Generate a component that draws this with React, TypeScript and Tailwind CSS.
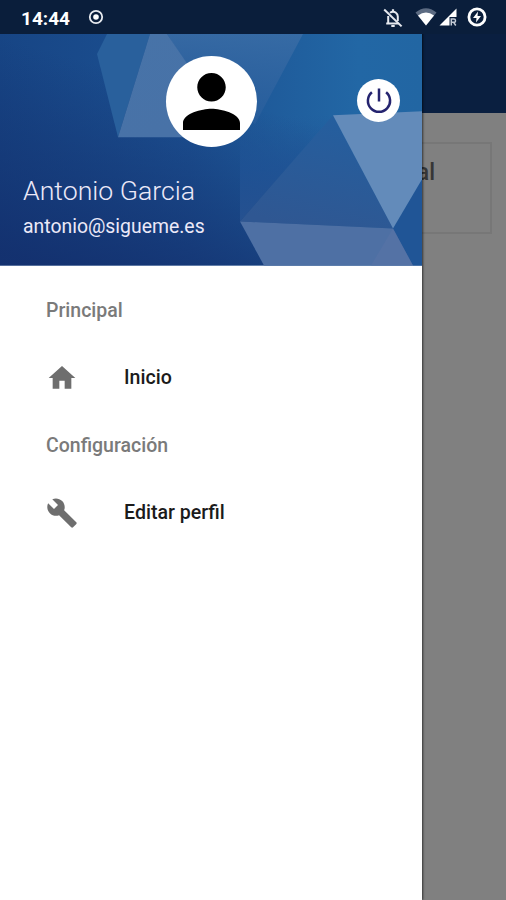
import type { ReactNode } from "react"

type MenuItem = {
  label: string
  icon: ReactNode
}

type MenuSection = {
  title: string
  items: MenuItem[]
}

const HomeIcon = () => (
  <svg viewBox="0 0 24 24" className="size-8 fill-[#6e6e6e]">
    <path d="M10 20v-6h4v6h5v-8h3L12 3 2 12h3v8z" />
  </svg>
)

const WrenchIcon = () => (
  <svg viewBox="0 0 24 24" className="size-8 fill-[#6e6e6e]">
    <path d="M22.7 19l-9.1-9.1c.9-2.3.4-5-1.5-6.9-2-2-5-2.4-7.4-1.3L9 6 6 9 1.6 4.7C.4 7.1.9 10.1 2.9 12.1c1.9 1.9 4.6 2.4 6.9 1.5l9.1 9.1c.4.4 1 .4 1.4 0l2.3-2.3c.5-.4.5-1.1.1-1.4z" />
  </svg>
)

const sections: MenuSection[] = [
  {
    title: "Principal",
    items: [{ label: "Inicio", icon: <HomeIcon /> }],
  },
  {
    title: "Configuración",
    items: [{ label: "Editar perfil", icon: <WrenchIcon /> }],
  },
]

function StatusBar() {
  return (
    <div className="relative z-20 flex h-[34px] shrink-0 items-center bg-[#0a1e3b] pl-[21px] pr-[19px] text-white">
      <span className="mt-0.5 w-[50px] whitespace-nowrap text-[19px] font-bold leading-none">14:44</span>
      <svg viewBox="0 0 16 16" className="ml-[17px] size-4">
        <circle cx="8" cy="8" r="6.2" fill="none" stroke="#e8ebf0" strokeWidth="1.8" />
        <circle cx="8" cy="8" r="2.8" fill="#fff" />
      </svg>

      <div className="ml-auto flex items-center">
        <svg viewBox="0 0 20 20" className="mt-px size-5" fill="none" stroke="#e6e9ef">
          <path d="M7 4.8Q10 2.6 13 4.8Q14.8 6 14.8 8.5V13M5.2 8V15M3.2 15.6H15.5" strokeWidth="2" />
          <path d="M10 1.2V4M8.3 18H11.7" strokeWidth="2.2" />
          <path d="M1.2 1.5L18.6 18.4" strokeWidth="2" />
        </svg>
        <svg viewBox="0 0 22 18" className="ml-3 h-[18px] w-[22px]">
          <path d="M0.5 4.5Q11 -4 21.5 4.5L11 17.5Z" fill="#5c6b82" />
          <path d="M3 7.5Q11 1.5 19 7.5L11 17.5Z" fill="#fff" />
        </svg>
        <svg viewBox="0 0 18 18" className="ml-0.5 mr-px size-[18px]">
          <path d="M17.5 0.5V9H10.5V17.5H0.5Z" fill="#fff" />
          <path d="M12.3 17.5V11H15Q16.5 11 16.5 12.7T15 14.3H12.3M14.6 14.3L16.8 17.5" fill="none" stroke="#c3cad5" strokeWidth="1.5" />
        </svg>
        <svg viewBox="0 0 20 20" className="ml-[9px] size-5">
          <circle cx="10" cy="10" r="8.1" fill="none" stroke="#fff" strokeWidth="2.8" />
          <path d="M11 4.5L6 11h3.5L9 15.5 14 9h-3.5z" fill="#fff" />
        </svg>
      </div>
    </div>
  )
}

function HeaderArtwork() {
  return (
    <svg viewBox="0 0 422 231" preserveAspectRatio="none" className="absolute inset-0 size-full">
      <defs>
        <linearGradient id="base" x1="0" y1="0" x2="1" y2="0">
          <stop offset="0" stopColor="#174585" />
          <stop offset="0.45" stopColor="#1c5192" />
          <stop offset="0.85" stopColor="#2267a5" />
          <stop offset="1" stopColor="#2266a3" />
        </linearGradient>
        <linearGradient id="shade" gradientUnits="userSpaceOnUse" x1="170" y1="50" x2="115" y2="250">
          <stop offset="0" stopColor="#132f6d" stopOpacity="0" />
          <stop offset="1" stopColor="#132f6d" stopOpacity="0.9" />
        </linearGradient>
        <linearGradient id="facet" x1="0" y1="0" x2="0.3" y2="1">
          <stop offset="0" stopColor="#4773a8" />
          <stop offset="1" stopColor="#4872a7" />
        </linearGradient>
        <linearGradient id="veil" x1="0" y1="0" x2="0" y2="1">
          <stop offset="0" stopColor="#3a6da6" stopOpacity="0.85" />
          <stop offset="1" stopColor="#2c5f9d" stopOpacity="0.6" />
        </linearGradient>
        <linearGradient id="fold" x1="0" y1="0" x2="0" y2="1">
          <stop offset="0" stopColor="#22599a" stopOpacity="0" />
          <stop offset="0.5" stopColor="#205396" stopOpacity="0.7" />
          <stop offset="1" stopColor="#265190" />
        </linearGradient>
        <linearGradient id="slope" x1="0.75" y1="0" x2="0.4" y2="1">
          <stop offset="0" stopColor="#245f9f" />
          <stop offset="1" stopColor="#2f5792" />
        </linearGradient>
      </defs>
      <rect width="422" height="231" fill="url(#base)" />
      <rect width="422" height="231" fill="url(#shade)" />
      <path d="M303 0L255 90L185 28L167 0Z" fill="url(#veil)" />
      <path d="M107 0H150L118 103L97 20Z" fill="#29609c" />
      <path d="M150 0H167L186 28L215 103H118Z" fill="url(#facet)" />
      <path d="M240 80L333 81L240 187Z" fill="url(#fold)" />
      <path d="M333 81L240 187L393 194Z" fill="url(#slope)" />
      <path d="M422 145V231H413L393 194Z" fill="#205596" />
      <path d="M333 81L422 77V145L393 194Z" fill="#638bba" />
      <path d="M240 187L393 194L413 231H264Z" fill="#4e70a4" />
      <path d="M393 194L413 231H371Z" fill="#5873a6" fillOpacity="0.6" />
    </svg>
  )
}

function DrawerHeader() {
  return (
    <header className="relative h-[231.5px] shrink-0 overflow-hidden">
      <HeaderArtwork />
      <div className="relative flex h-full flex-col pl-[23px] pr-[22px] pt-[22px] text-[#ece9f8]">
        <div className="grid grid-cols-[1fr_91px_1fr] items-center">
          <div className="col-start-2 flex size-[91px] items-center justify-center rounded-full bg-white">
            <svg viewBox="4 4 16 16" className="size-[57px] fill-black">
              <path d="M12 12c2.21 0 4-1.79 4-4s-1.79-4-4-4-4 1.79-4 4 1.79 4 4 4zm0 2c-2.67 0-8 1.34-8 4v2h16v-2c0-2.66-5.33-4-8-4z" />
            </svg>
          </div>
          <button className="-mt-0.5 flex size-[43px] items-center justify-center justify-self-end rounded-full bg-white">
            <svg viewBox="0 0 28 28" className="size-7" fill="none" stroke="#25246f" strokeWidth="2.5">
              <path d="M14 1.5V14.5M6.9 5.2a11.1 11.1 0 1 0 14.2 0" />
            </svg>
          </button>
        </div>
        <p className="mt-7 text-[26.7px] font-light leading-8">Antonio Garcia</p>
        <p className="mt-1.5 text-[19.4px] leading-7">antonio@sigueme.es</p>
      </div>
    </header>
  )
}

function Drawer() {
  return (
    <aside className="absolute inset-y-0 left-0 z-10 flex w-[422px] flex-col bg-white pt-[34px] shadow-[1px_0_2px_rgba(0,0,0,0.6)]">
      <DrawerHeader />
      <nav className="flex flex-col pt-[11px]">
        {sections.map((section) => (
          <section key={section.title}>
            <h2 className="flex h-[67px] items-center pl-[46px] pt-0.5 text-[19.5px] font-medium text-[#7a7a7a]">
              {section.title}
            </h2>
            {section.items.map((item) => (
              <a key={item.label} className="flex h-[68px] items-center pl-[46px] text-[19.6px] font-medium text-[#1b1b1b]">
                {item.icon}
                <span className="ml-[46px]">{item.label}</span>
              </a>
            ))}
          </section>
        ))}
      </nav>
    </aside>
  )
}

export default function App() {
  return (
    <div className="relative flex h-[900px] w-[506px] flex-col overflow-hidden bg-[#808080] font-['Roboto',sans-serif]">
      <StatusBar />
      <div className="h-[79px] shrink-0 bg-[#0a1f40]" />
      <main className="px-3.5 pt-[29px]">
        <div className="flex h-[92px] justify-end border-2 border-[#777777] pr-[55px] pt-[15px] text-[23px] font-medium leading-7 text-[#363636]">
          Principal
        </div>
      </main>
      <Drawer />
    </div>
  )
}
